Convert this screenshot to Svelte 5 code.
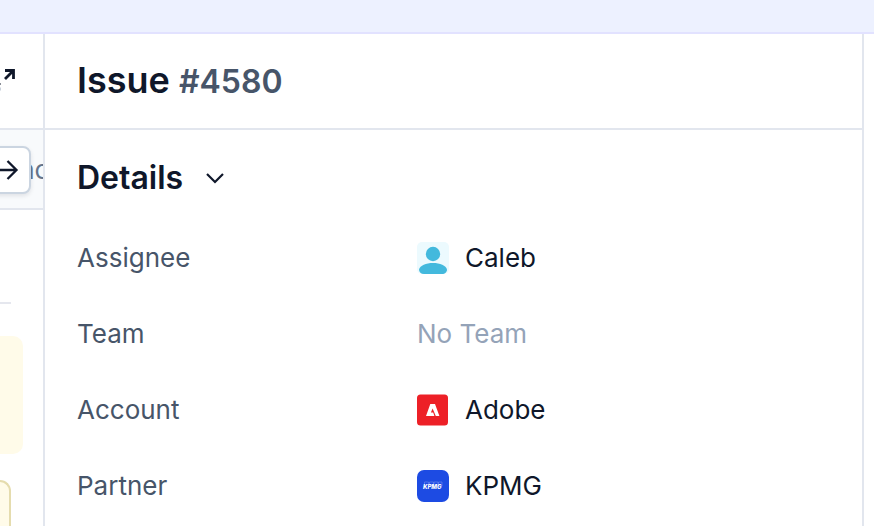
<script>
	let open = true;

	const rows = [
		{ label: 'Assignee', value: 'Caleb', icon: 'person' },
		{ label: 'Team', value: '' },
		{ label: 'Account', value: 'Adobe', icon: 'adobe' },
		{ label: 'Partner', value: 'KPMG', icon: 'kpmg' }
	];

	function toggle() {
		open = !open;
	}
</script>

<div class="app">
	<div class="topbar"></div>

	<div class="main">
		<div class="thread">
			<div class="thread-header">
				<button class="plain" aria-label="Expand">
					<svg width="28" height="28" viewBox="0 0 28 28" fill="none" stroke="#0f172a" stroke-width="2.8">
						<path d="M16 3.500h8.500V12M24 4l-8 8" />
						<path d="M11 24.500H2.500V16M3 24l8-8" />
						<path d="M11 20.500v3" stroke="#94a3b8" stroke-width="1" />
					</svg>
				</button>
			</div>

			<div class="tabs">
				<span class="tab">ac</span>
				<button class="next" aria-label="Next">
					<svg width="24" height="24" viewBox="0 0 24 24" fill="none" stroke="#0f172a" stroke-width="2.300">
						<path d="M1 12h20.500M12.500 3l9 9-9 9" />
					</svg>
				</button>
			</div>

			<div class="messages">
				<hr />
				<div class="note"></div>
				<div class="note outlined"></div>
			</div>
		</div>

		<div class="panel">
			<div class="panel-header">
				<h1>Issue <span>#4580</span></h1>
			</div>

			<div class="details">
				<h2>
					<button class="plain toggle" aria-expanded={open} on:click={toggle}>
						Details
						<svg width="20" height="20" viewBox="0 0 20 20" fill="none" stroke="#0f172a" stroke-width="2.200">
							<path d="M2 6l8 8 8-8" />
						</svg>
					</button>
				</h2>

				{#if open}
					<dl>
						{#each rows as row}
							<div class="row">
								<dt>{row.label}</dt>
								{#if row.value}
									<dd>
										{#if row.icon === 'person'}
											<svg width="32" height="32" viewBox="0 0 32 32">
												<rect width="32" height="32" rx="5" fill="#ecfafe" />
												<circle cx="16" cy="12" r="7.200" fill="#43b9dd" />
												<path d="M2 27.500C3 23.500 9 21 16 21s13 2.500 14 6.500c0 2.500-2 4.500-5 4.500H7c-3 0-5-2-5-4.500z" fill="#43b9dd" />
											</svg>
										{:else if row.icon === 'adobe'}
											<svg width="32" height="32" viewBox="0 0 32 32">
												<rect width="31" height="31" y="0.500" rx="3.500" fill="#ed2027" />
												<path d="M13.300 10h4.700l4.400 12h-3.600L15.600 14.500l-1.700 4h2.300l1.200 3.500H9z" fill="#fff" />
											</svg>
										{:else}
											<svg width="32" height="32" viewBox="0 0 32 32">
												<rect width="32" height="32" rx="7" fill="#1d4be3" />
												<path d="M7.500 16v-4h4v3M12.500 15v-3h4v3M17 15v-3h4v3M21.500 15v-3H25v4" fill="none" stroke="#6f8df0" stroke-width="0.600" />
												<text x="6" y="19" class="kpmg">KPMG</text>
											</svg>
										{/if}
										{row.value}
									</dd>
								{:else}
									<dd class="empty">No {row.label}</dd>
								{/if}
							</div>
						{/each}
					</dl>
				{/if}
			</div>
		</div>
	</div>
</div>

<style>
	.app {
		display: flex;
		flex-direction: column;
		min-height: 100vh;
		overflow: hidden;
		background: #fff;
		color: #0f172a;
		font-family: Inter, "Liberation Sans", sans-serif;
		font-size: 26px;
		line-height: 36px;
	}

	.topbar {
		height: 32px;
		background: #edf1ff;
		border-bottom: 2px solid #e2e2ff;
	}

	.main {
		flex: 1;
		display: flex;
		padding-right: 10px;
	}

	.plain {
		padding: 0;
		border: 0;
		background: none;
		color: inherit;
		font: inherit;
		cursor: pointer;
	}

	svg {
		display: block;
		flex: none;
	}

	.thread {
		display: flex;
		flex-direction: column;
		flex: 0 0 43px;
		overflow: hidden;
	}

	.thread-header,
	.panel-header {
		display: flex;
		align-items: center;
		height: 94px;
		border-bottom: 2px solid #e2e6ee;
	}

	.thread-header {
		justify-content: flex-end;
		padding-right: 26px;
	}

	.tabs {
		position: relative;
		display: flex;
		align-items: center;
		height: 76px;
		padding: 2px 0 0 20px;
		background: #f8fafc;
		border-bottom: 2px solid #e2e6ee;
		color: #64748b;
	}

	.next {
		position: absolute;
		right: 12px;
		display: flex;
		align-items: center;
		justify-content: flex-end;
		box-sizing: border-box;
		width: 48px;
		height: 48px;
		padding: 0 10px;
		border: 2px solid #cbd5e1;
		border-radius: 8px;
		background: #fff;
		box-shadow: 0 2px 4px rgb(15 23 42 / 0.1);
		cursor: pointer;
	}

	.messages {
		flex: 1;
		padding-right: 20px;
	}

	hr {
		height: 2px;
		margin: 92px 12px 32px 0;
		border: 0;
		background: #e5e7ee;
	}

	.note {
		height: 118px;
		border-radius: 0 10px 10px 0;
		background: #fffbe9;
	}

	.outlined {
		height: 60px;
		margin: 26px 12px -16px 0;
		border: 2px solid #e5dcae;
		border-width: 2px 2px 0 0;
		border-radius: 0 12px 0 0;
		box-sizing: border-box;
	}

	.panel {
		flex: 1;
		border: solid #e2e6ee;
		border-width: 0 2px;
	}

	.panel-header,
	.details {
		padding-left: 32px;
	}

	h1,
	h2 {
		margin: 0;
		font-weight: 600;
	}

	h1 {
		font-size: 36px;
		line-height: 44px;
	}

	h1 span {
		color: #475569;
		font-size: 32px;
	}

	h2 {
		padding: 30px 0 24px;
		font-size: 32px;
		line-height: 36px;
	}

	.toggle {
		display: flex;
		align-items: center;
		gap: 22px;
	}

	dl,
	dd {
		margin: 0;
	}

	.row {
		display: grid;
		grid-template-columns: 340px 1fr;
		align-items: center;
		height: 76px;
	}

	dt {
		color: #475569;
	}

	dd {
		display: flex;
		align-items: center;
		gap: 16px;
	}

	.empty {
		color: #94a3b8;
	}

	.kpmg {
		fill: #fff;
		font-size: 6px;
		font-style: italic;
		font-weight: 800;
	}
</style>
